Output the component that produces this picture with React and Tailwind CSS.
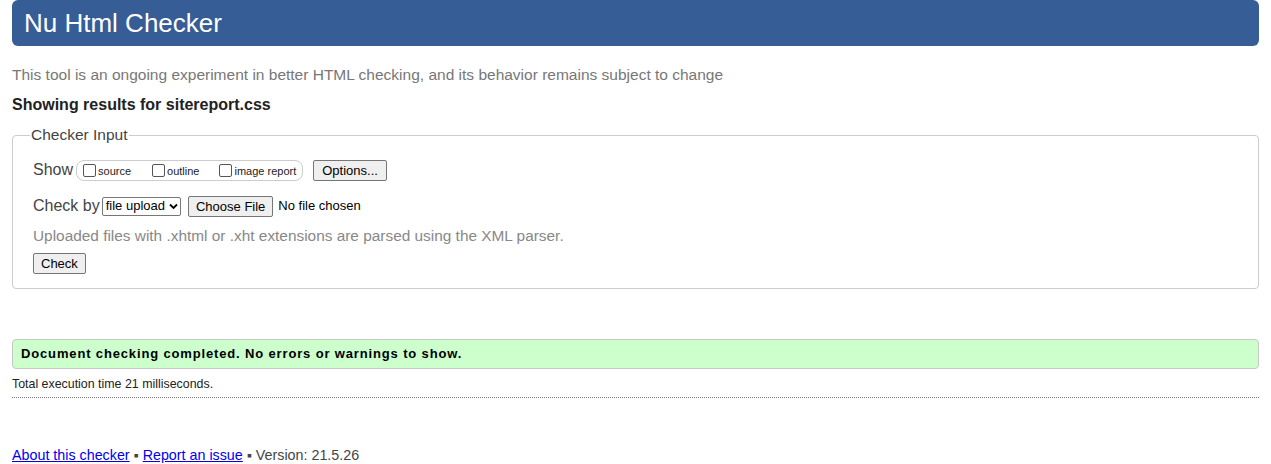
import React from "react";

export default function App() {
  return (
    <div className="min-h-[464px] bg-white px-3 font-['Liberation_Sans',Arial,sans-serif] text-[#222]">
      <h1 className="flex h-[46px] items-center rounded-[6px] bg-[#365d96] pl-3 text-[26px] font-normal leading-none text-white">
        Nu Html Checker
      </h1>
      <p className="mt-[20px] text-[15.5px] leading-[18px] text-[#777]">
        This tool is an ongoing experiment in better HTML checking, and its behavior remains subject to change
      </p>
      <p className="mt-[12px] text-[16px] font-bold leading-[18px] text-[#222]">Showing results for sitereport.css</p>

      <fieldset className="mt-[12px] rounded-[4px] border border-[#ccc] px-[20px] pb-[13px] pt-[8px]">
        <legend className="-ml-[3px] px-[1px] text-[15.5px] leading-[18px] text-[#444]">Checker Input</legend>
        <div className="mt-[6px] flex items-center text-[16px] text-[#444]">
          <span>Show</span>
          <span className="ml-[3px] flex h-[21px] items-center rounded-[8px] border border-[#ccc] pl-[6px] pr-[6px] text-[11px] text-[#222]">
            <label className="flex items-center">
              <span className="inline-block h-[13px] w-[13px] rounded-[2px] border border-[#555] bg-white" />
              <span className="ml-[2px] mt-[2px]">source</span>
            </label>
            <label className="ml-[21px] flex items-center">
              <span className="inline-block h-[13px] w-[13px] rounded-[2px] border border-[#555] bg-white" />
              <span className="ml-[2px] mt-[2px]">outline</span>
            </label>
            <label className="ml-[20px] flex items-center">
              <span className="inline-block h-[13px] w-[13px] rounded-[2px] border border-[#555] bg-white" />
              <span className="ml-[2px] mt-[2px]">image report</span>
            </label>
          </span>
          <button className="ml-[10px] h-[21px] rounded-[2px] border border-[#767676] bg-[#efefef] px-[8px] text-[13px] text-black">
            Options...
          </button>
        </div>
        <div className="mt-[12px] flex items-center text-[16px] text-[#444]">
          <span>Check by</span>
          <span className="ml-[2px] flex h-[19px] items-center rounded-[2px] border border-[#767676] bg-white pl-[3px] pr-[2px] text-[13px] text-black">
            file upload
            <svg className="ml-[4px]" width="9" height="7" viewBox="0 0 9 7">
              <path d="M1 1.5 L4.5 5 L8 1.5" fill="none" stroke="#000" strokeWidth="1.8" />
            </svg>
          </span>
          <button className="ml-[7px] h-[21px] rounded-[2px] border border-[#767676] bg-[#efefef] px-[7px] text-[13px] text-black">
            Choose File
          </button>
          <span className="ml-[5px] text-[13px] text-black">No file chosen</span>
        </div>
        <p className="mt-[9px] text-[15.4px] leading-[18px] text-[#888]">
          Uploaded files with .xhtml or .xht extensions are parsed using the XML parser.
        </p>
        <button className="mt-[8px] h-[21px] rounded-[2px] border border-[#767676] bg-[#efefef] px-[7px] text-[13px] text-black">
          Check
        </button>
      </fieldset>

      <div className="mt-[50px] flex h-[30px] items-center rounded-[4px] border border-[#c8c8c8] bg-[#ccffcc] pl-[8px] text-[13px] font-bold tracking-[0.85px] text-black">
        Document checking completed. No errors or warnings to show.
      </div>
      <p className="mt-[8px] text-[12.4px] leading-[14px] text-[#222]">Total execution time 21 milliseconds.</p>
      <div className="mt-[6px] border-b border-dotted border-[#777]" />
      <p className="mt-[49px] text-[14.3px] leading-[16px] text-[#444]">
        <a href="#" className="text-[#0000ee] underline">About this checker</a>
        {" \u25aa "}
        <a href="#" className="text-[#0000ee] underline">Report an issue</a>
        {" \u25aa Version: 21.5.26"}
      </p>
    </div>
  );
}
